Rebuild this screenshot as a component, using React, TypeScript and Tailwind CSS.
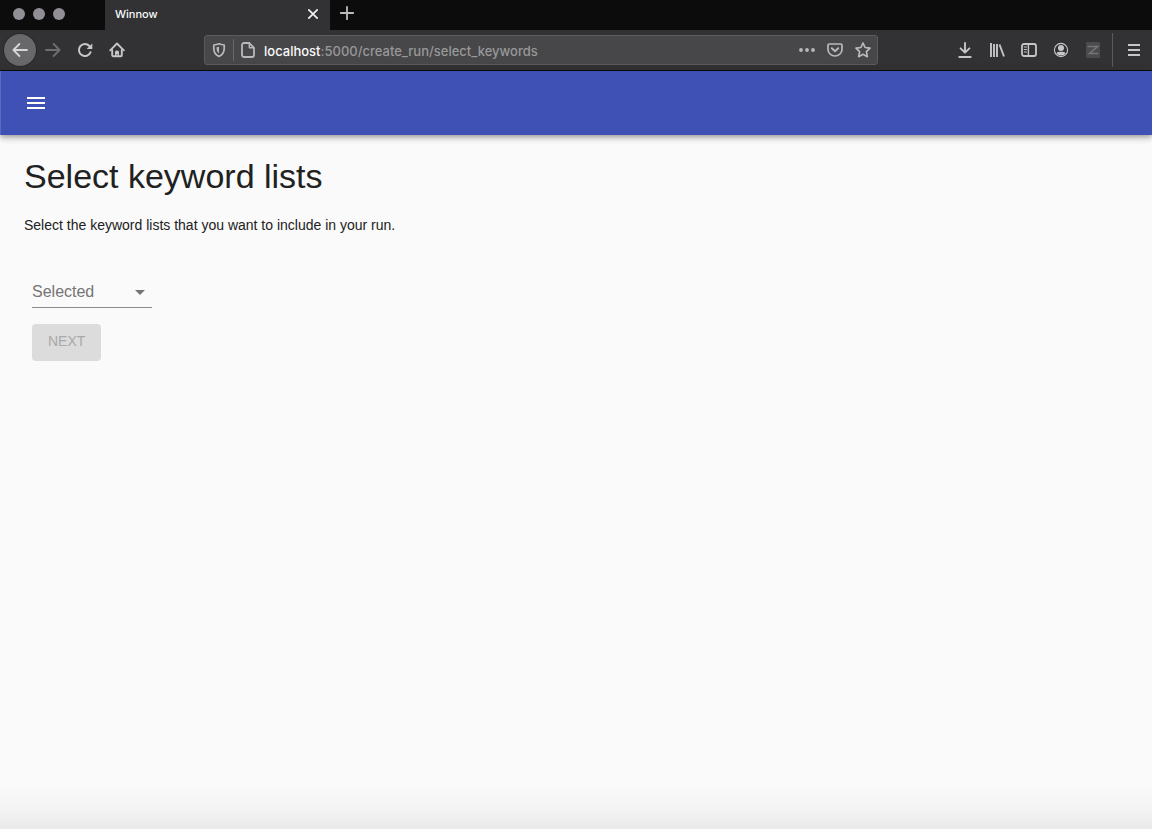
import { useState, type ReactNode } from "react";

function ToolButton({
  label,
  children,
  className = "text-[#c6c6c7]",
}: {
  label: string;
  children: ReactNode;
  className?: string;
}) {
  return (
    <button
      type="button"
      aria-label={label}
      className={`flex size-8 shrink-0 items-center justify-center rounded-sm ${className}`}
    >
      {children}
    </button>
  );
}

function Icon({ children }: { children: ReactNode }) {
  return (
    <svg
      viewBox="0 0 16 16"
      className="size-4 shrink-0"
      fill="none"
      stroke="currentColor"
      strokeWidth="2"
      strokeLinecap="round"
      strokeLinejoin="round"
      aria-hidden="true"
    >
      {children}
    </svg>
  );
}

function TabStrip() {
  return (
    <div className="flex h-[30px] bg-[#0c0c0d]">
      <div className="flex w-[105px] shrink-0 items-center gap-2 pb-0.5 pl-[13px]">
        <span className="size-3 rounded-full bg-[#918f95]" />
        <span className="size-3 rounded-full bg-[#918f95]" />
        <span className="size-3 rounded-full bg-[#918f95]" />
      </div>
      <div className="flex w-[225px] items-center justify-between bg-[#323234] pr-[9px] pb-0.5 pl-2.5">
        <span className="text-[11px] font-medium text-[#f9f9fa]">Winnow</span>
        <button type="button" aria-label="Close tab" className="text-[#f0f0f1]">
          <Icon>
            <path d="M3.8 3.8l8.4 8.4M12.2 3.8l-8.4 8.4" strokeWidth="1.7" />
          </Icon>
        </button>
      </div>
      <button
        type="button"
        aria-label="New tab"
        className="flex items-center pr-2 pb-1 pl-[9px] text-[#bcbcbd]"
      >
        <Icon>
          <path d="M8 1.8v12.4M1.800 8h12.400" strokeWidth="1.8" />
        </Icon>
      </button>
    </div>
  );
}

function AddressBar() {
  return (
    <div className="mx-[71px] flex h-[30px] min-w-0 flex-1 items-center rounded-[3px] border border-[#5b5b5d] bg-[#474749] px-1.5 text-[#b9b9ba]">
      <Icon>
        <path
          d="M8 1.8C6.3 2.6 4.5 2.9 2.8 3v3.6c0 3.8 1.9 6.5 5.2 7.8 3.3-1.3 5.2-4 5.2-7.8V3C11.5 2.9 9.7 2.6 8 1.8z"
          strokeWidth="1.7"
        />
        <path d="M8 4.7v6.6C6.3 10.2 5.6 8.7 5.6 6.500V5.2C6.5 5.1 7.3 5 8 4.7z" fill="currentColor" stroke="none" />
      </Icon>
      <span className="mx-1.5 h-5.5 w-px bg-[#68686a]" />
      <Icon>
        <path d="M4 1h5.2L14 5.8V13a2 2 0 0 1-2 2H4a2 2 0 0 1-2-2V3a2 2 0 0 1 2-2z" strokeWidth="1.8" />
        <path d="M9.3 1.2V5.7h4.5" strokeWidth="1.4" />
      </Icon>
      <p className="mt-0.5 ml-2 min-w-0 flex-1 truncate text-[13px] leading-5 font-medium text-[#989899]">
        <span className="text-[#f9f9fa]">localhost</span>:5000/create_run/select_keywords
      </p>
      <div className="flex gap-3">
        <button type="button" aria-label="Page actions">
          <Icon>
            <g fill="currentColor" stroke="none">
              <circle cx="2" cy="8" r="1.9" />
              <circle cx="8" cy="8" r="1.9" />
              <circle cx="14" cy="8" r="1.9" />
            </g>
          </Icon>
        </button>
        <button type="button" aria-label="Save to Pocket">
          <Icon>
            <path
              d="M2.2 2h11.6a1.2 1.2 0 0 1 1.2 1.2V7.2a7 6.8 0 0 1-14 0V3.2A1.2 1.2 0 0 1 2.2 2z"
              strokeWidth="1.7"
            />
            <path d="M4.8 6.2L8 9.2l3.2-3" strokeWidth="1.9" />
          </Icon>
        </button>
        <button type="button" aria-label="Bookmark this page">
          <Icon>
            <path
              d="M8 1l2.1 4.5 4.9.7-3.6 3.5.9 5L8 12.3l-4.3 2.4.9-5L1 6.2l4.9-.7z"
              strokeWidth="1.7"
            />
          </Icon>
        </button>
      </div>
    </div>
  );
}

function Toolbar() {
  return (
    <div className="flex h-[41px] items-center border-b border-[#0c0c0d] bg-[#323234] pr-0.5 pl-1">
      <button
        type="button"
        aria-label="Back"
        className="mr-px flex size-8 shrink-0 items-center justify-center rounded-full bg-[#68686a] text-[#d6d6d7] ring-1 ring-[#28282a]"
      >
        <Icon>
          <path d="M15 8H1.4M7.4 2L1.4 8l6 6" strokeWidth="1.8" />
        </Icon>
      </button>
      <ToolButton label="Forward" className="text-[#6f6f71]">
        <Icon>
          <path d="M1 8h13.6M8.6 2l6 6-6 6" strokeWidth="1.8" />
        </Icon>
      </ToolButton>
      <ToolButton label="Reload">
        <Icon>
          <path d="M13.5 10.3A6 6 0 1 1 12.4 4" />
          <path d="M15.3 1.4v5.2a.5.5 0 0 1-.5.5H9.600z" fill="currentColor" stroke="none" />
        </Icon>
      </ToolButton>
      <ToolButton label="Home">
        <Icon>
          <path d="M1.2 8.3L8 1.5l6.8 6.800" strokeWidth="1.9" />
          <path d="M3.2 8v5.200a1 1 0 0 0 1 1h7.600a1 1 0 0 0 1-1V8" strokeWidth="1.9" />
          <path
            d="M6 14.500V10a1.500 1.500 0 0 1 1.500-1.500h1A1.500 1.500 0 0 1 10 10v4.500H8.700v-2.200H7.500v2.200z"
            fill="currentColor"
            stroke="none"
          />
        </Icon>
      </ToolButton>
      <AddressBar />
      <ToolButton label="Downloads">
        <Icon>
          <path d="M8 1v9.5M3.6 6.3L8 10.700l4.4-4.4M2.3 15h11.4" strokeWidth="1.9" />
        </Icon>
      </ToolButton>
      <ToolButton label="Library">
        <Icon>
          <path d="M2 1v14M5 2v13M8 2v13M10.5 2.500L15 14.500" strokeWidth="1.9" strokeLinecap="butt" />
        </Icon>
      </ToolButton>
      <ToolButton label="Sidebars">
        <Icon>
          <rect x="1" y="2" width="14" height="12" rx="2" strokeWidth="1.8" />
          <path d="M7.4 2v12" strokeWidth="1.4" />
          <path d="M3.3 5h2.2M3.3 7.5h2.2M3.3 10h2.2" strokeWidth="1" />
        </Icon>
      </ToolButton>
      <ToolButton label="Account">
        <Icon>
          <circle cx="8" cy="8" r="6.600" strokeWidth="1.1" />
          <circle cx="8" cy="6" r="3" fill="currentColor" stroke="none" />
          <path d="M3.2 11.2Q5 9.5 8 9.8q3-.3 4.8 1.4Q11 13.4 8 13.4t-4.8-2.2z" fill="currentColor" stroke="none" />
        </Icon>
      </ToolButton>
      <ToolButton label="Extension" className="text-[#747476]">
        <svg viewBox="0 0 16 16" className="size-4" aria-hidden="true">
          <rect x="1" width="14" height="16" rx="1" fill="#4b4b4d" />
          <path d="M2.500 4.500h10L4.500 11.500h9" fill="none" stroke="currentColor" strokeWidth="1.6" />
        </svg>
      </ToolButton>
      <span className="mr-[5px] ml-[3px] h-[34px] w-px bg-[#5b5b5d]" />
      <ToolButton label="Open menu">
        <Icon>
          <path d="M2 3h12M2 8h12M2 13h12" strokeLinecap="butt" />
        </Icon>
      </ToolButton>
    </div>
  );
}

function KeywordForm() {
  const [list, setList] = useState("");
  return (
    <form className="flex flex-col items-start gap-4 px-2" onSubmit={(e) => e.preventDefault()}>
      <div className="grid w-[120px] items-center border-b border-[#8c8c8c] pt-0.5">
        <select
          aria-label="Selected keyword lists"
          value={list}
          onChange={(e) => setList(e.target.value)}
          className="col-start-1 row-start-1 h-[30px] w-full appearance-none bg-transparent pr-6 text-base text-[#757575] outline-none"
        >
          <option value="">Selected</option>
        </select>
        <svg
          viewBox="0 0 24 24"
          className="pointer-events-none col-start-1 row-start-1 size-6 justify-self-end fill-[#757575]"
          aria-hidden="true"
        >
          <path d="M7 10l5 5 5-5z" />
        </svg>
      </div>
      <button
        type="submit"
        disabled={list === ""}
        className="rounded bg-[#dcdcdc] px-4 pt-[5px] pb-2 text-sm leading-6 text-[#a9a9a9]"
      >
        NEXT
      </button>
    </form>
  );
}

export default function App() {
  return (
    <div className="flex min-h-screen flex-col bg-[#fafafa] font-['Liberation_Sans',Arial,sans-serif] text-[#212121]">
      <div className="font-[Inter,sans-serif]">
        <TabStrip />
        <Toolbar />
      </div>
      <header className="flex h-16 items-center bg-[#3f51b5] px-6 shadow-[inset_1px_0_0_rgba(255,255,255,0.15),0_2px_4px_-1px_rgba(0,0,0,0.2),0_4px_5px_0_rgba(0,0,0,0.14),0_1px_10px_0_rgba(0,0,0,0.12)]">
        <button type="button" aria-label="Open navigation" className="text-white">
          <svg viewBox="0 0 24 24" className="size-6 fill-current" aria-hidden="true">
            <path d="M3 18h18v-2H3v2zm0-5h18v-2H3v2zm0-7v2h18V6H3z" />
          </svg>
        </button>
      </header>
      <main className="flex-1 px-6 pt-5">
        <h1 className="text-[34px] leading-[42px]">Select keyword lists</h1>
        <p className="mt-[18px] mb-10 text-sm">Select the keyword lists that you want to include in your run.</p>
        <KeywordForm />
      </main>
      <div className="h-12 bg-linear-to-b from-[#fafafa] via-[#f5f5f5] to-[#e9e9e9]" />
    </div>
  );
}
